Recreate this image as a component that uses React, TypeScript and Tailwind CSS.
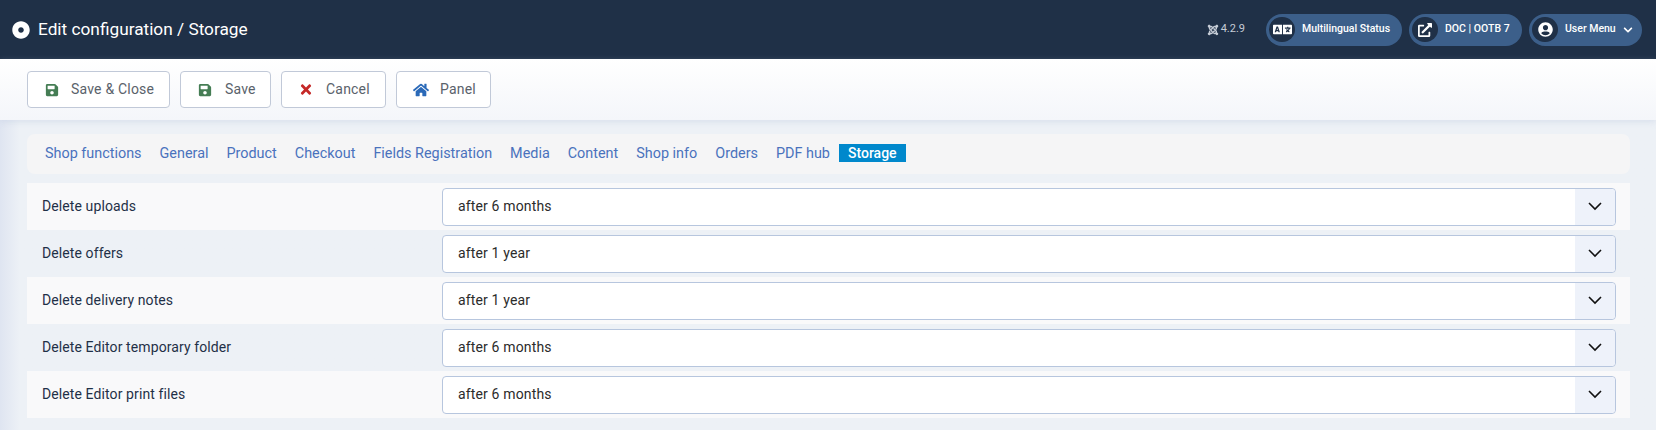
import { FaDotCircle, FaSave, FaTimes, FaHome, FaLanguage, FaExternalLinkAlt, FaUserCircle, FaChevronDown, FaJoomla } from "react-icons/fa";
import type { ReactNode } from "react";

const tabs = ["Shop functions", "General", "Product", "Checkout", "Fields Registration", "Media", "Content", "Shop info", "Orders", "PDF hub"];

const rows = [
  { label: "Delete uploads", value: "after 6 months" },
  { label: "Delete offers", value: "after 1 year" },
  { label: "Delete delivery notes", value: "after 1 year" },
  { label: "Delete Editor temporary folder", value: "after 6 months" },
  { label: "Delete Editor print files", value: "after 6 months" },
];

const ToolButton = ({ icon, label, w, gap }: { icon: ReactNode; label: string; w: string; gap: string }) => (
  <button className={`flex h-[37px] items-center rounded-[4px] border border-[#c1c9d8] bg-white pl-[17px] text-[14px] text-[#5a626b] ${w} ${gap}`}>
    <span className="flex w-[14px] justify-center">{icon}</span>
    <span className="tracking-[0.2px]">{label}</span>
  </button>
);

const Pill = ({ icon, label, w, chevron }: { icon: ReactNode; label: string; w: string; chevron?: boolean }) => (
  <div className={`flex h-[32px] items-center rounded-full bg-[#3c5f8a] pl-[3px] text-[10.5px] font-medium text-white ${w}`}>
    <span className="flex h-[25px] w-[26px] items-center justify-center rounded-full bg-[#1f3047]">{icon}</span>
    <span className="mb-[1px] ml-[7px]">{label}</span>
    {chevron && <FaChevronDown className="ml-[7px] text-[10px]" />}
  </div>
);

export default function App() {
  return (
    <div className="h-[430px] overflow-hidden bg-gradient-to-r from-[#dfe5f1] to-[#edf1f6] to-[20px] font-['Roboto',sans-serif]">
      {/* Header */}
      <header className="flex h-[59px] items-center bg-[#1f3047] pl-[12px] pr-[14px] text-white">
        <FaDotCircle className="text-[18px]" />
        <h1 className="ml-[8px] text-[17.25px] leading-none">Edit configuration / Storage</h1>
        <div className="ml-auto flex items-center">
          <span className="mr-[21px] flex items-center gap-[2px] text-[11px] text-[#c5ccd6]">
            <FaJoomla className="text-[12px]" /> 4.2.9
          </span>
          <div className="flex items-center gap-[7px]">
            <Pill icon={<FaLanguage className="text-[19px]" />} label="Multilingual Status" w="w-[136px]" />
            <Pill icon={<FaExternalLinkAlt className="text-[14px]" />} label="DOC | OOTB 7" w="w-[113px]" />
            <Pill icon={<FaUserCircle className="text-[15px]" />} label="User Menu" w="w-[113px]" chevron />
          </div>
        </div>
      </header>

      {/* Toolbar */}
      <div className="flex h-[61px] gap-[10px] bg-gradient-to-b from-white to-[#f4f6fa] pl-[27px] pt-[12px] shadow-[0_2px_6px_rgba(180,195,220,0.35)]">
        <ToolButton icon={<FaSave className="text-[#457d54]" />} label="Save & Close" w="w-[143px]" gap="gap-[12px]" />
        <ToolButton icon={<FaSave className="text-[#457d54]" />} label="Save" w="w-[91px]" gap="gap-[13px]" />
        <ToolButton icon={<FaTimes className="text-[15px] text-[#c52827]" />} label="Cancel" w="w-[105px]" gap="gap-[13px]" />
        <ToolButton icon={<FaHome className="shrink-0 text-[16px] text-[#2a69b8]" />} label="Panel" w="w-[95px]" gap="gap-[12px]" />
      </div>

      {/* Content */}
      <div className="pl-[27px] pr-[26px] pt-[14px]">
        <nav className="flex h-[40px] items-center rounded-[8px] bg-[#f5f5f6] pl-[18px] text-[14.4px] text-[#4a72bd]">
          <div className="flex items-center gap-[18px]">
            {tabs.map((t) => (
              <span key={t}>{t}</span>
            ))}
          </div>
          <span className="mb-[2px] ml-[9px] bg-[#0088cc] px-[9px] text-[14px] font-medium leading-[18px] text-white">Storage</span>
        </nav>

        <div className="mt-[9px]">
          {rows.map((r, i) => (
            <div key={r.label} className={`flex h-[47px] items-center pl-[15px] pr-[14px] text-[14px] ${i % 2 === 0 ? "bg-[#f9f9fa]" : ""}`}>
              <span className="w-[400px] tracking-[0.1px] text-[#1f3047]">{r.label}</span>
              <div className="flex h-[38px] flex-1 items-center rounded-[4px] border border-[#b7c6de] bg-white pl-[15px] text-[#2b2b2b]">
                <span className="tracking-[0.15px]">{r.value}</span>
                <span className="ml-auto flex h-full w-[40px] items-center justify-center rounded-r-[4px] bg-[#eef2fa]">
                  <svg width="14" height="9" viewBox="0 0 14 9" fill="none" stroke="#111" strokeWidth="1.6">
                    <path d="M1 1l6 6 6-6" />
                  </svg>
                </span>
              </div>
            </div>
          ))}
        </div>
      </div>
    </div>
  );
}
